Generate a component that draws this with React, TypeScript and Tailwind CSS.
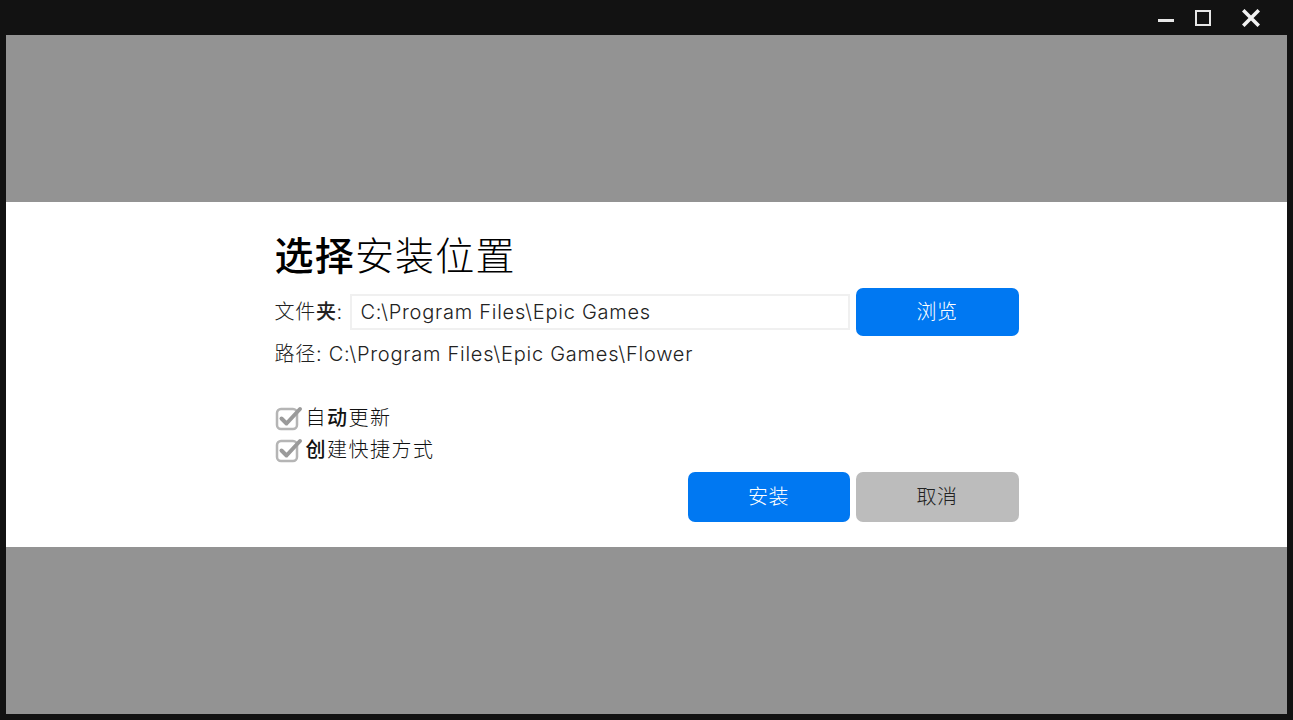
import React from "react";

const font = { fontFamily: 'Inter, "Noto Sans CJK SC", sans-serif' };

function CheckIcon() {
  return (
    <svg width="30" height="26" viewBox="0 0 30 26" className="shrink-0">
      <rect x="2" y="4" width="20" height="20" rx="4" fill="#fff" stroke="#b5b5b5" strokeWidth="2.5" />
      <path d="M6.5 13.5 L11.5 18.5 L25 4" fill="none" stroke="#9a9a9a" strokeWidth="4" strokeLinecap="round" strokeLinejoin="round" />
    </svg>
  );
}

export default function App() {
  return (
    <div className="w-[1293px] h-[720px] bg-[#121212] flex flex-col overflow-hidden" style={font}>
      <div className="h-[35px] flex items-center justify-end shrink-0">
        <div className="flex items-center">
          <div className="w-[16px] h-[3px] bg-[#e6e6e6] mt-[5px] mr-[21px]" />
          <div className="w-[16px] h-[16px] border-2 border-[#e6e6e6] mr-[31px]" />
          <svg width="18" height="18" viewBox="0 0 18 18" className="mr-[33px]">
            <path d="M2.5 2.5 L15.5 15.5 M15.5 2.5 L2.5 15.5" stroke="#f2f2f2" strokeWidth="3.6" strokeLinecap="square" />
          </svg>
        </div>
      </div>
      <div className="flex-1 mx-[6px] mb-[6px] bg-[#939393] flex flex-col">
        <div className="h-[167px]" />
        <div className="h-[345px] bg-white flex justify-center">
          <div className="w-[744px] pt-[31px]">
            <h1 className="text-[39px] leading-[46px] text-black font-light tracking-[1.2px]">
              <span className="font-medium">选择</span>安装位置
            </h1>
            <div className="flex items-center mt-[9px]">
              <span className="text-[20px] text-[#222] font-light w-[75px] tracking-[0.7px]">文件<span className="font-medium">夹</span>:</span>
              <div className="w-[500px] h-[36px] border-2 border-[#f0f0f0] flex items-center pl-[9px] text-[20px] text-[#222] font-light tracking-[0.75px]">
                C:\Program Files\Epic Games
              </div>
              <button className="ml-[6px] w-[163px] h-[48px] rounded-[7px] bg-[#0078f2] text-white text-[20px] font-light tracking-[0.5px]">
                浏览
              </button>
            </div>
            <div className="mt-[4px] text-[20px] text-[#222] font-light leading-[28px] tracking-[0.75px]">
              路径: C:\Program Files\Epic Games\Flower
            </div>
            <div className="mt-[37px] flex flex-col gap-[6px]">
              <div className="flex items-center text-[20px] text-[#111] font-light leading-[26px] tracking-[1.5px]">
                <CheckIcon />
                <span className="ml-[1px]">自<span className="font-medium">动</span>更新</span>
              </div>
              <div className="flex items-center text-[20px] text-[#111] font-light leading-[26px] tracking-[1.5px]">
                <CheckIcon />
                <span className="ml-[1px]"><span className="font-medium">创</span>建快捷方式</span>
              </div>
            </div>
            <div className="flex justify-end mt-[9px] gap-[6px]">
              <button className="w-[162px] h-[50px] rounded-[7px] bg-[#0078f2] text-white text-[20px] font-light tracking-[0.5px]">
                安装
              </button>
              <button className="w-[163px] h-[50px] rounded-[7px] bg-[#bcbcbc] text-[#222] text-[20px] font-light tracking-[0.5px]">
                取消
              </button>
            </div>
          </div>
        </div>
        <div className="flex-1" />
      </div>
    </div>
  );
}
